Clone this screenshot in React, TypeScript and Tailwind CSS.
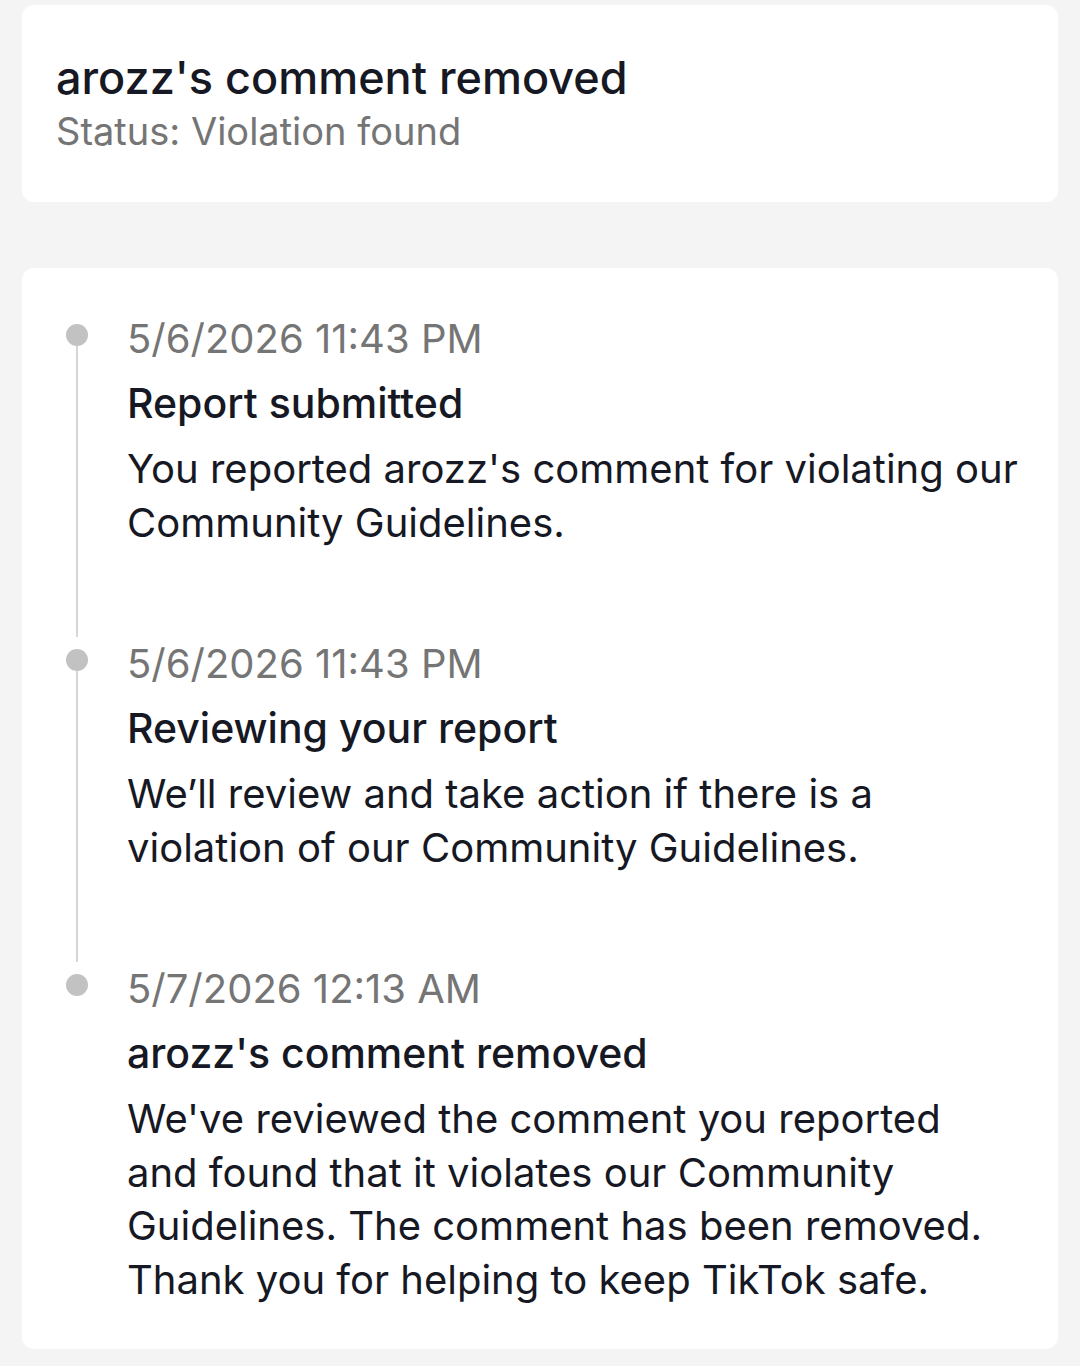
const events = [
  {
    time: "5/6/2026 11:43 PM",
    title: "Report submitted",
    lines: ["You reported arozz's comment for violating our", "Community Guidelines."],
  },
  {
    time: "5/6/2026 11:43 PM",
    title: "Reviewing your report",
    lines: ["We’ll review and take action if there is a", "violation of our Community Guidelines."],
  },
  {
    time: "5/7/2026 12:13 AM",
    title: "arozz's comment removed",
    lines: [
      "We've reviewed the comment you reported",
      "and found that it violates our Community",
      "Guidelines. The comment has been removed.",
      "Thank you for helping to keep TikTok safe.",
    ],
  },
];

export default function App() {
  return (
    <div className="min-h-screen bg-[#f4f4f4] px-[22px] pt-[5px] pb-[16px] font-['Inter','Liberation_Sans',sans-serif]">
      <div className="h-[197px] rounded-[12px] bg-white pl-[34px] pt-[46px]">
        <h1 className="text-[45px] leading-[54px] font-medium text-[#161823]">arozz's comment removed</h1>
        <p className="text-[38px] leading-[52px] text-[#757575]">Status: Violation found</p>
      </div>

      <div className="mt-[66px] rounded-[12px] bg-white pl-[44px] pr-[24px] pt-[44px] pb-[43px]">
        {events.map((e, i) => {
          const last = i === events.length - 1;
          return (
            <div key={i} className="flex">
              <div className="flex w-[22px] shrink-0 flex-col items-center pt-[12px]">
                <span className="h-[22px] w-[22px] shrink-0 rounded-full bg-[#c2c2c2]" />
                {!last && <span className="w-[2px] flex-1 bg-[#d6d6d6]" />}
              </div>
              <div className={`ml-[39px] flex-1 ${last ? "" : "pb-[88px]"}`}>
                <div className="text-[40px] leading-[54px] text-[#757575]">{e.time}</div>
                <div className="mt-[10px] text-[41px] leading-[54px] font-medium text-[#161823]">{e.title}</div>
                <p className="mt-[12px] text-[40px] leading-[53.5px] text-[#161823]">
                  {e.lines.map((l, j) => (
                    <span key={j} className="block whitespace-nowrap">{l}</span>
                  ))}
                </p>
              </div>
            </div>
          );
        })}
      </div>
    </div>
  );
}
